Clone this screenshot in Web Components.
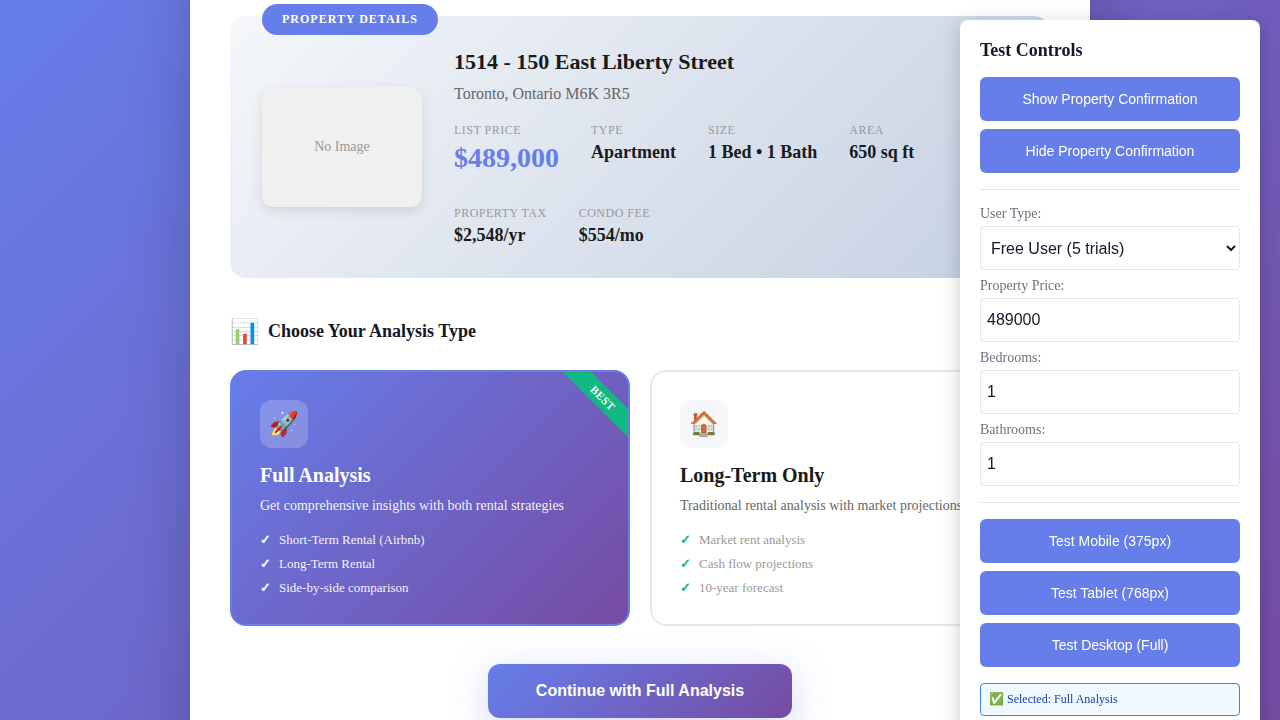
<!DOCTYPE html>
<html lang="en">
<head>
<meta charset="utf-8">
<title>Property Confirmation</title>
<style>
  html, body { margin: 0; height: 100%; overflow: hidden; }
  body {
    font-family: "Liberation Serif", "Times New Roman", serif;
    color: #111827;
    background: linear-gradient(135deg, #667eea 0%, #764ba2 100%);
  }
</style>
</head>
<body>
<confirm-modal>
  <property-card badge="Property Details" heading="1514 - 150 East Liberty Street" address="Toronto, Ontario M6K 3R5">
    <property-stat label="List Price" primary>$489,000</property-stat>
    <property-stat label="Type">Apartment</property-stat>
    <property-stat label="Size">1 Bed • 1 Bath</property-stat>
    <property-stat label="Area">650 sq ft</property-stat>
    <property-stat label="Property Tax">$2,548/yr</property-stat>
    <property-stat label="Condo Fee">$554/mo</property-stat>
  </property-card>
  <section-title icon="📊">Choose Your Analysis Type</section-title>
  <option-grid>
    <analysis-option selected ribbon="BEST" icon="🚀" heading="Full Analysis" text="Get comprehensive insights with both rental strategies">
      <feature-item light>Short-Term Rental (Airbnb)</feature-item>
      <feature-item light>Long-Term Rental</feature-item>
      <feature-item light>Side-by-side comparison</feature-item>
    </analysis-option>
    <analysis-option icon="🏠" heading="Long-Term Only" text="Traditional rental analysis with market projections">
      <feature-item>Market rent analysis</feature-item>
      <feature-item>Cash flow projections</feature-item>
      <feature-item>10-year forecast</feature-item>
    </analysis-option>
  </option-grid>
  <continue-button>Continue with Full Analysis</continue-button>
</confirm-modal>

<test-panel heading="Test Controls">
  <panel-button>Show Property Confirmation</panel-button>
  <panel-button>Hide Property Confirmation</panel-button>
  <panel-rule></panel-rule>
  <panel-field label="User Type:" type="select" value="Free User (5 trials)"></panel-field>
  <panel-field label="Property Price:" value="489000"></panel-field>
  <panel-field label="Bedrooms:" value="1"></panel-field>
  <panel-field label="Bathrooms:" value="1"></panel-field>
  <panel-rule></panel-rule>
  <panel-button>Test Mobile (375px)</panel-button>
  <panel-button>Test Tablet (768px)</panel-button>
  <panel-button>Test Desktop (Full)</panel-button>
  <panel-status>✅ Selected: Full Analysis</panel-status>
</test-panel>

<script>
  const define = (name, render) => customElements.define(name, class extends HTMLElement {
    connectedCallback() {
      if (this.shadowRoot) return;
      this.attachShadow({ mode: 'open' }).innerHTML = render(k => this.getAttribute(k) || '', this);
    }
  });

  define('confirm-modal', () => `
    <style>
      :host { display: block; box-sizing: border-box; width: 900px; height: 980px; margin: -100px auto 0;
        padding: 116px 40px 40px; background: #fff; box-shadow: 0 20px 60px rgba(0,0,0,.2); }
    </style><slot></slot>`);

  define('property-card', a => `
    <style>
      :host { display: flex; align-items: center; gap: 32px; position: relative; box-sizing: border-box;
        height: 262px; padding: 32px; border-radius: 16px;
        background: linear-gradient(135deg, #f5f7fa 0%, #c3cfe2 100%); }
      .badge { position: absolute; top: -12px; left: 32px; padding: 8px 20px; border-radius: 20px;
        background: #667eea; color: #fff; font-size: 12px; line-height: 15px; font-weight: 700;
        letter-spacing: 1px; text-transform: uppercase; }
      .image { flex: none; width: 160px; height: 120px; display: grid; place-items: center;
        border-radius: 12px; background: #f0f0f0; color: #999; font-size: 14px;
        box-shadow: 0 4px 12px rgba(0,0,0,.1); }
      .info { flex: 1; align-self: flex-start; }
      h2 { margin: 0 0 8px; font-size: 22px; line-height: 1.3; color: #1a1a1a; }
      p { margin: 0 0 20px; font-size: 16px; color: #666; }
      .stats { display: flex; flex-wrap: wrap; gap: 32px; }
    </style>
    <div class="badge">${a('badge')}</div>
    <div class="image">No Image</div>
    <div class="info"><h2>${a('heading')}</h2><p>${a('address')}</p><div class="stats"><slot></slot></div></div>`);

  define('property-stat', a => `
    <style>
      :host { display: flex; flex-direction: column; gap: 4px; }
      .label { font-size: 12px; letter-spacing: .5px; text-transform: uppercase; color: #999; }
      .value { font-size: 18px; font-weight: 700; color: #1a1a1a; }
      :host([primary]) .value { font-size: 28px; color: #667eea; }
    </style>
    <div class="label">${a('label')}</div><div class="value"><slot></slot></div>`);

  define('section-title', a => `
    <style>
      :host { display: flex; align-items: center; gap: 8px; height: 28px; margin: 40px 0 24px; font-size: 18px; font-weight: 700; }
      .icon { font-size: 24px; line-height: 28px; }
      .text { padding-bottom: 2px; }
    </style>
    <span class="icon">${a('icon')}</span><span class="text"><slot></slot></span>`);

  define('option-grid', () => `
    <style>:host { display: grid; grid-template-columns: 1fr 1fr; gap: 20px; }</style><slot></slot>`);

  define('analysis-option', a => `
    <style>
      :host { display: block; position: relative; overflow: hidden; box-sizing: border-box; height: 256px;
        padding: 28px; border: 2px solid #e5e7eb; border-radius: 16px; background: #fff; }
      :host([selected]) { border-color: #667eea; background: linear-gradient(135deg, #667eea 0%, #764ba2 100%); }
      .icon { width: 48px; height: 48px; display: flex; align-items: center; justify-content: center; margin-bottom: 16px;
        border-radius: 12px; background: #f5f7fa; font-size: 24px; }
      h3 { margin: 0 0 8px; font-size: 20px; color: #1a1a1a; }
      p { margin: 0 0 16px; font-size: 14px; line-height: 1.5; color: #666; white-space: nowrap; }
      .list { display: flex; flex-direction: column; gap: 8px; }
      :host([selected]) .icon { background: rgba(255,255,255,.2); }
      :host([selected]) h3 { color: #fff; }
      :host([selected]) p { color: rgba(255,255,255,.95); }
      .ribbon { position: absolute; top: 15.5px; right: -30px; width: 110px; line-height: 20px;
        text-align: center; transform: rotate(45deg); background: #10b981; color: #fff;
        font-size: 11px; font-weight: 700; letter-spacing: .5px; }
    </style>
    ${a('ribbon') ? `<div class="ribbon">${a('ribbon')}</div>` : ''}
    <div class="icon">${a('icon')}</div>
    <h3>${a('heading')}</h3><p>${a('text')}</p><div class="list"><slot></slot></div>`);

  define('feature-item', () => `
    <style>
      :host { display: flex; align-items: center; gap: 8px; height: 16px; font-size: 13px; color: #999; }
      :host([light]) { color: rgba(255,255,255,.95); }
      b { color: #10b981; }
      :host([light]) b { color: #fff; }
    </style><b>✓</b><span><slot></slot></span>`);

  define('continue-button', () => `
    <style>
      :host { display: flex; justify-content: center; margin-top: 38px; }
      button { border: 0; border-radius: 12px; padding: 18px 48px; height: 54px; color: #fff;
        background: linear-gradient(135deg, #667eea 0%, #764ba2 100%);
        font: 700 16px/18px "Liberation Sans", Arial, sans-serif;
        box-shadow: 0 10px 40px rgba(102,126,234,.3); }
    </style><button><slot></slot></button>`);

  define('test-panel', a => `
    <style>
      :host { display: block; position: fixed; top: 20px; right: 20px; box-sizing: border-box; width: 300px;
        padding: 20px; border-radius: 8px; background: #fff; box-shadow: 0 4px 20px rgba(0,0,0,.2); }
      h3 { margin: 0 0 16px; font-size: 18px; line-height: 21px; }
    </style><h3>${a('heading')}</h3><slot></slot>`);

  define('panel-button', () => `
    <style>
      :host { display: block; margin-bottom: 8px; }
      button { display: block; width: 100%; height: 44px; border: 0; border-radius: 6px; background: #667eea;
        color: #fff; font: 14px "Liberation Sans", Arial, sans-serif; }
    </style><button><slot></slot></button>`);

  define('panel-rule', () => `
    <style>:host { display: block; height: 1px; margin: 16px 0; background: #e5e7eb; }</style>`);

  define('panel-field', a => `
    <style>
      :host { display: block; margin-bottom: 8px; }
      label { display: block; margin-bottom: 4px; font-size: 14px; line-height: 16px; color: #6b7280; }
      input, select { display: block; box-sizing: border-box; width: 100%; height: 44px; margin: 0; padding: 6px;
        border: 1px solid #e5e7eb; border-radius: 4px; background: #fff; color: #111827;
        font: 16px "Liberation Sans", Arial, sans-serif; }
      select { padding-right: 3px; }
    </style>
    <label>${a('label')}</label>
    ${a('type') === 'select' ? `<select><option>${a('value')}</option></select>` : `<input type="text" value="${a('value')}">`}`);

  define('panel-status', () => `
    <style>
      :host { display: block; box-sizing: border-box; height: 33px; margin-top: 16px; padding: 8px;
        border: 1px solid #3b82f6; border-radius: 4px; background: #f0f9ff; color: #1e40af;
        font-size: 12px; line-height: 15px; }
    </style><slot></slot>`);
</script>
</body>
</html>
